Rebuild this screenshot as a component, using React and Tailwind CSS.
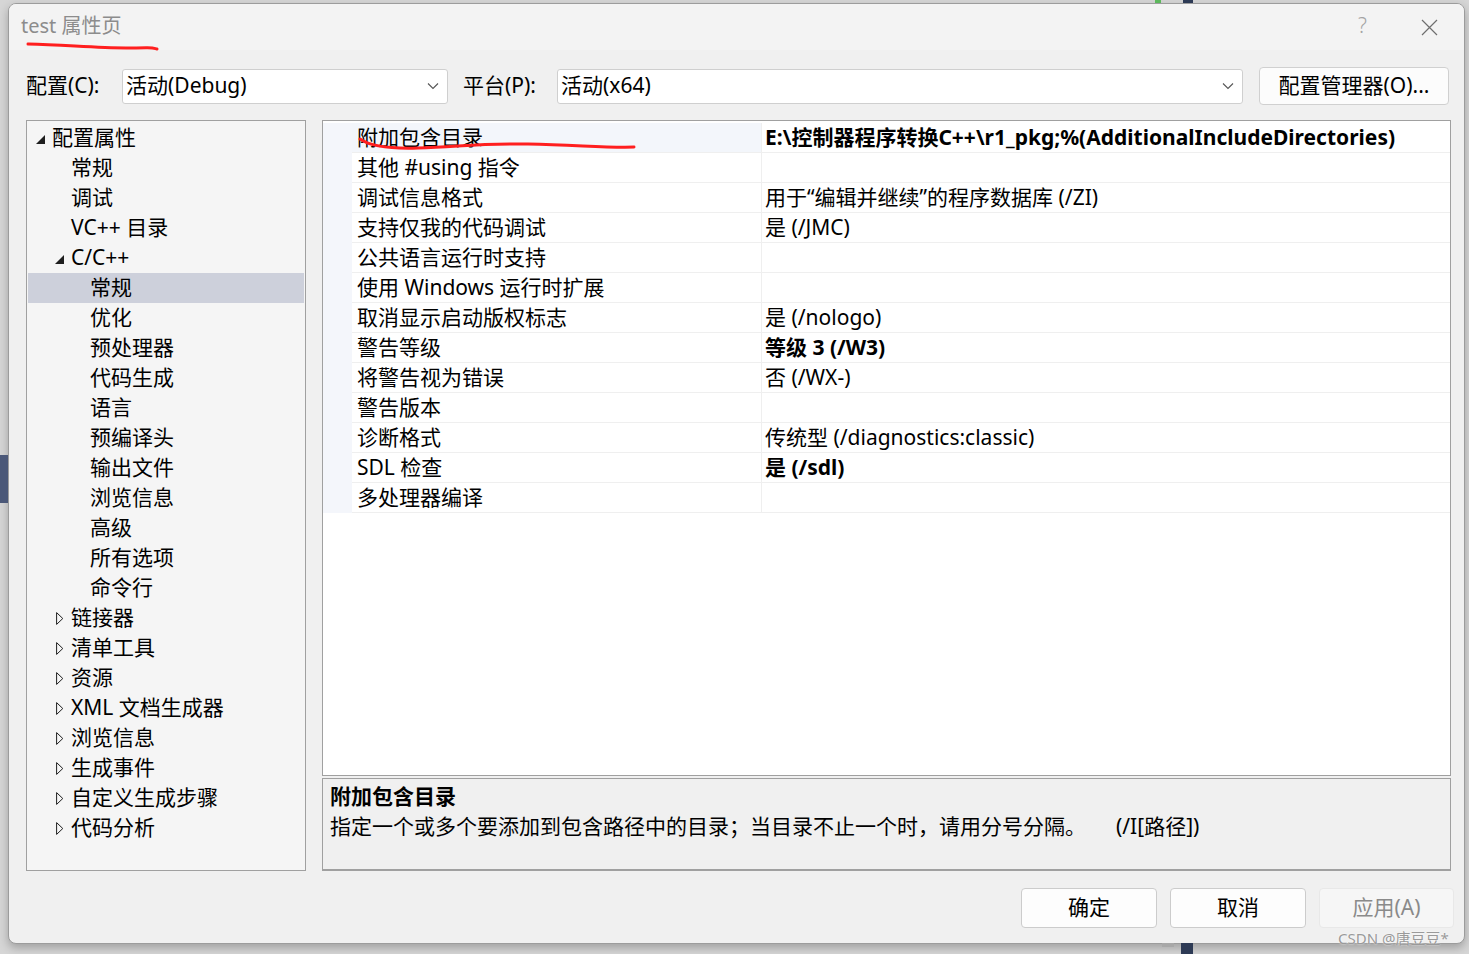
import React from 'react';

const FONT = "font-['Noto_Sans','Noto_Sans_CJK_SC',sans-serif]";

const tree = [
  { label: '配置属性', level: 0, icon: 'open' },
  { label: '常规', level: 1 },
  { label: '调试', level: 1 },
  { label: 'VC++ 目录', level: 1 },
  { label: 'C/C++', level: 1, icon: 'open' },
  { label: '常规', level: 2, selected: true },
  { label: '优化', level: 2 },
  { label: '预处理器', level: 2 },
  { label: '代码生成', level: 2 },
  { label: '语言', level: 2 },
  { label: '预编译头', level: 2 },
  { label: '输出文件', level: 2 },
  { label: '浏览信息', level: 2 },
  { label: '高级', level: 2 },
  { label: '所有选项', level: 2 },
  { label: '命令行', level: 2 },
  { label: '链接器', level: 1, icon: 'closed' },
  { label: '清单工具', level: 1, icon: 'closed' },
  { label: '资源', level: 1, icon: 'closed' },
  { label: 'XML 文档生成器', level: 1, icon: 'closed' },
  { label: '浏览信息', level: 1, icon: 'closed' },
  { label: '生成事件', level: 1, icon: 'closed' },
  { label: '自定义生成步骤', level: 1, icon: 'closed' },
  { label: '代码分析', level: 1, icon: 'closed' },
];

const indent = { 0: 'pl-[5px]', 1: 'pl-[24px]', 2: 'pl-[43px]' };

const props = [
  { name: '附加包含目录', value: 'E:\\控制器程序转换C++\\r1_pkg;%(AdditionalIncludeDirectories)', bold: true, selected: true },
  { name: '其他 #using 指令', value: '' },
  { name: '调试信息格式', value: '用于“编辑并继续”的程序数据库 (/ZI)' },
  { name: '支持仅我的代码调试', value: '是 (/JMC)' },
  { name: '公共语言运行时支持', value: '' },
  { name: '使用 Windows 运行时扩展', value: '' },
  { name: '取消显示启动版权标志', value: '是 (/nologo)' },
  { name: '警告等级', value: '等级 3 (/W3)', bold: true },
  { name: '将警告视为错误', value: '否 (/WX-)' },
  { name: '警告版本', value: '' },
  { name: '诊断格式', value: '传统型 (/diagnostics:classic)' },
  { name: 'SDL 检查', value: '是 (/sdl)', bold: true },
  { name: '多处理器编译', value: '' },
];

function Chevron() {
  return (
    <svg width="12" height="8" viewBox="0 0 12 8" className="shrink-0">
      <path d="M1 1.5 L6 6.5 L11 1.5" fill="none" stroke="#555" strokeWidth="1.1" />
    </svg>
  );
}

function Combo({ value, width }) {
  return (
    <div className={`${width} h-[35px] bg-white border border-[#cfcfcf] rounded-[3px] flex items-center justify-between pl-[3px] pr-[8px]`}>
      <span>{value}</span>
      <Chevron />
    </div>
  );
}

function TreeIcon({ type }) {
  if (type === 'open') {
    return (
      <svg width="9" height="9" viewBox="0 0 9 9" className="ml-[3px] mt-[3px]">
        <polygon points="9,0 9,9 0,9" fill="#1e1e1e" />
      </svg>
    );
  }
  if (type === 'closed') {
    return (
      <svg width="8" height="13" viewBox="0 0 8 13" className="ml-[4px]">
        <polygon points="0.6,0.6 6.8,6.5 0.6,12.4" fill="none" stroke="#1e1e1e" strokeWidth="1" />
      </svg>
    );
  }
  return null;
}

function Button({ children, disabled }) {
  return (
    <div
      className={
        disabled
          ? 'w-[135px] h-[40px] rounded-[4px] border border-[#e8e8e8] bg-[#f6f6f6] flex items-center justify-center text-[#8a8a8a]'
          : 'w-[136px] h-[40px] rounded-[4px] border border-[#cccccc] bg-[#fdfdfd] flex items-center justify-center text-black'
      }
    >
      {children}
    </div>
  );
}

export default function App() {
  return (
    <div className={`${FONT} relative w-[1469px] h-[954px] overflow-hidden bg-[#d6d6d6] text-[21px] text-black`}>
      {/* bits of the window behind */}
      <div className="absolute left-0 top-[455px] w-[8px] h-[48px] bg-[#4b5878]" />
      <div className="absolute left-[1183px] top-0 w-[10px] h-[3px] bg-[#2d3a55]" />
      <div className="absolute left-[1155px] top-0 w-[6px] h-[3px] bg-[#5cb85c]" />
      <div className="absolute left-[1181px] top-[943px] w-[12px] h-[11px] bg-[#2d3a55]" />
      <div className="absolute left-[1162px] top-[943px] w-[12px] h-[4px] bg-[#a8a8a8]" />

      <div className="pl-[8px] pt-[3px]">
        <div className="w-[1457px] h-[941px] rounded-[8px] border border-[#9c9c9c] bg-[#f0f0f0] overflow-hidden shadow-[0_4px_10px_rgba(0,0,0,0.25)] flex flex-col">
          {/* title bar */}
          <div className="h-[46px] bg-[#f3f3f3] flex items-center justify-between pl-[12px] pr-[26px] shrink-0">
            <div className="relative text-[20px] text-[#8c8c8c] -mt-[2px]">
              test 属性页
              <svg width="134" height="10" viewBox="0 0 134 10" className="absolute left-[5px] top-[31px]">
                <path d="M2 2 C 40 3, 70 6, 100 6 S 124 5, 131 7" fill="none" stroke="#ff1f1f" strokeWidth="3" strokeLinecap="round" />
              </svg>
            </div>
            <div className="flex items-center gap-[54px]">
              <span className="text-[21px] text-[#a3a3a3] font-light -mt-[3px]">?</span>
              <svg width="17" height="17" viewBox="0 0 17 17">
                <path d="M1 1 L16 16 M16 1 L1 16" stroke="#6e6e6e" strokeWidth="1.2" />
              </svg>
            </div>
          </div>

          {/* config row */}
          <div className="mt-[17px] h-[38px] pl-[17px] flex items-center shrink-0">
            <span className="w-[96px]">配置(C):</span>
            <Combo value="活动(Debug)" width="w-[326px]" />
            <span className="ml-[15px] w-[94px]">平台(P):</span>
            <Combo value="活动(x64)" width="w-[686px]" />
            <div className="ml-[16px] w-[190px] h-[38px] rounded-[4px] border border-[#d0d0d0] bg-[#fcfcfc] flex items-center justify-center">
              配置管理器(O)...
            </div>
          </div>

          {/* main area */}
          <div className="mt-[15px] h-[751px] pl-[17px] flex gap-[16px] shrink-0">
            {/* tree */}
            <div className="w-[280px] h-full border border-[#a0a0a0] bg-[#f5f5f5] pt-[2px]">
              {tree.map((item, i) => (
                <div
                  key={i}
                  className={`h-[30px] flex items-center mx-[1px] ${item.selected ? 'bg-[#cdd0db]' : ''} ${indent[item.level]}`}
                >
                  <div className="w-[19px] h-full flex items-center shrink-0">
                    <TreeIcon type={item.icon} />
                  </div>
                  <span className="whitespace-nowrap">{item.label}</span>
                </div>
              ))}
            </div>

            {/* property grid + description */}
            <div className="w-[1129px] flex flex-col gap-[2px]">
              <div className="h-[657px] border border-[#a0a0a0] bg-white pt-[2px] relative">
                {props.map((p, i) => (
                  <div key={i} className="h-[30px] flex">
                    <div className="w-[29px] bg-[#f4f6fb] shrink-0" />
                    <div
                      className={`w-[409px] shrink-0 border-b border-[#efefef] flex items-center pl-[5px] whitespace-nowrap relative ${p.selected ? 'bg-[#f3f6fb]' : ''}`}
                    >
                      {p.name}
                      {p.selected && (
                        <svg width="290" height="16" viewBox="0 0 290 16" className="absolute left-[6px] top-[14px]">
                          <path
                            d="M2 2 C 12 9, 30 12, 60 11 C 100 10, 120 6, 170 7 C 220 8, 250 11, 276 10"
                            fill="none"
                            stroke="#ff1f1f"
                            strokeWidth="3"
                            strokeLinecap="round"
                          />
                        </svg>
                      )}
                    </div>
                    <div
                      className={`flex-1 border-l border-b border-[#efefef] flex items-center pl-[3px] whitespace-nowrap ${p.bold ? 'font-bold' : ''}`}
                    >
                      {p.value}
                    </div>
                  </div>
                ))}
              </div>
              <div className="h-[93px] border border-b-2 border-[#a0a0a0] bg-[#f0f0f0] px-[7px] pt-[3px]">
                <div className="h-[30px] flex items-center font-bold">附加包含目录</div>
                <div className="h-[30px] flex items-center whitespace-nowrap">
                  <span className="w-[786px]">指定一个或多个要添加到包含路径中的目录；当目录不止一个时，请用分号分隔。</span>
                  <span>(/I[路径])</span>
                </div>
              </div>
            </div>
          </div>

          {/* buttons */}
          <div className="mt-[17px] pr-[10px] flex justify-end gap-[13px] shrink-0">
            <Button>确定</Button>
            <Button>取消</Button>
            <Button disabled>应用(A)</Button>
          </div>
        </div>
      </div>

      <div className="absolute left-[1338px] top-[927px] text-[15px] text-[#9a9a9a] [text-shadow:0_0_2px_#fff] whitespace-nowrap">
        CSDN @唐豆豆*
      </div>
    </div>
  );
}
